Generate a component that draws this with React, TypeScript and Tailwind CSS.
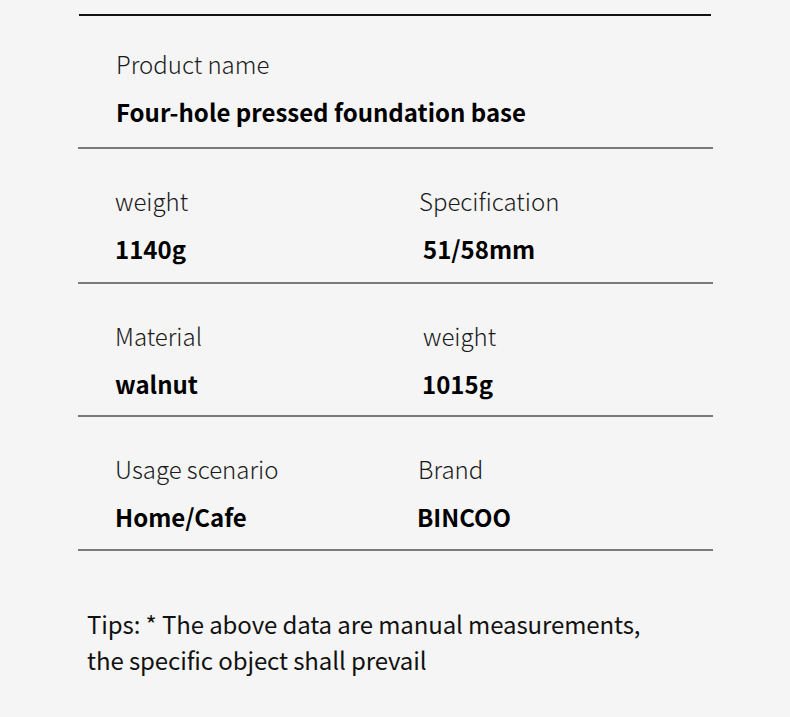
import React from "react";

const font = { fontFamily: '"Noto Sans CJK SC", "Noto Sans", sans-serif' };

function Cell({
  label,
  value,
  className = "",
  labelClass = "",
  valueClass = "",
}: {
  label: string;
  value: string;
  className?: string;
  labelClass?: string;
  valueClass?: string;
}) {
  return (
    <div className={className}>
      <div className={`text-[24px] leading-[36px] font-light text-[#1a1a1a] ${labelClass}`}>{label}</div>
      <div className={`mt-[12px] text-[24px] leading-[36px] font-bold text-black ${valueClass}`}>{value}</div>
    </div>
  );
}

export default function App() {
  return (
    <div className="w-[790px] h-[717px] bg-[#f5f5f5] overflow-hidden" style={font}>
      <div className="pt-[14px] pl-[78px] w-[713px]">
        <div className="ml-[1px] mr-[2px] h-[2px] bg-[#111]" />
        <div className="h-[133px] border-b-2 border-[#7a7a7a] pt-[30px] pl-[38px]">
          <Cell label="Product name" value="Four-hole pressed foundation base" />
        </div>
        <div className="h-[135px] border-b-2 border-[#7a7a7a] pt-[34px] flex">
          <Cell className="w-[340px] pl-[37px]" label="weight" value="1140g" />
          <Cell labelClass="ml-[1px]" valueClass="ml-[5px]" label="Specification" value="51/58mm" />
        </div>
        <div className="h-[133px] border-b-2 border-[#7a7a7a] pt-[34px] flex">
          <Cell className="w-[340px] pl-[37px]" label="Material" value="walnut" />
          <Cell labelClass="ml-[5px]" valueClass="ml-[4px]" label="weight" value="1015g" />
        </div>
        <div className="h-[134px] border-b-2 border-[#7a7a7a] pt-[34px] flex">
          <Cell className="w-[340px] pl-[37px]" label="Usage scenario" value="Home/Cafe" />
          <Cell valueClass="-ml-[1px]" label="Brand" value="BINCOO" />
        </div>
      </div>
      <div className="pl-[87px] pt-[55px] text-[24px] leading-[36px] text-[#111] tracking-[-0.1px]">
        <div>Tips: * The above data are manual measurements,</div>
        <div>the specific object shall prevail</div>
      </div>
    </div>
  );
}
